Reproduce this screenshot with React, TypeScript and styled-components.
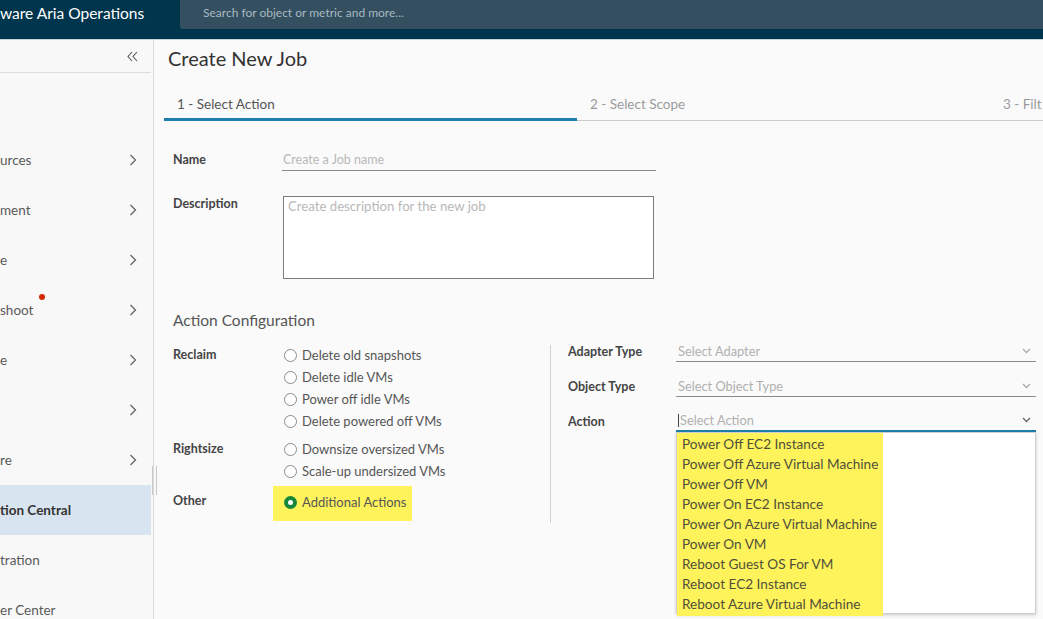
import React from "react";
import styled, { createGlobalStyle } from "styled-components";

const Global = createGlobalStyle`
  html, body { margin: 0; padding: 0; }
  body { font-family: Lato, "Open Sans", sans-serif; overflow: hidden; background: #fafafa; }
  * { box-sizing: border-box; }
`;

const Page = styled.div`
  width: 1043px;
  height: 619px;
  overflow: hidden;
  display: flex;
  flex-direction: column;
`;

const Header = styled.header`
  height: 40px;
  flex: none;
  display: flex;
  align-items: flex-start;
  background: #00364d;
  border-bottom: 1px solid #c5d3db;
`;

const Brand = styled.div`
  width: 180px;
  height: 29px;
  display: flex;
  align-items: center;
  color: #ffffff;
  font-size: 15.5px;
  white-space: nowrap;
  overflow: hidden;
  padding-bottom: 4px;
`;

const Search = styled.div`
  flex: 1;
  height: 29px;
  background: #344f5f;
  border-bottom-left-radius: 3px;
  display: flex;
  align-items: center;
  padding: 0 0 4px 23px;
  color: #a9b8c1;
  font-size: 12px;
`;

const Body = styled.div`
  flex: 1;
  display: flex;
  min-height: 0;
`;

const Sidebar = styled.nav`
  width: 154px;
  flex: none;
  background: #f8f8f8;
  border-right: 1px solid #dcdcdc;
  position: relative;
  display: flex;
  flex-direction: column;
`;

const CollapseRow = styled.div`
  height: 33px;
  flex: none;
  border-bottom: 1px solid #dcdcdc;
  margin-right: 2px;
  display: flex;
  align-items: center;
  justify-content: flex-end;
  padding-right: 13px;
  color: #555;
`;

const NavList = styled.div`
  padding-top: 12px;
  flex: none;
  display: flex;
  flex-direction: column;
`;

const NavItem = styled.div<{ $active?: boolean }>`
  height: 50px;
  flex: none;
  display: flex;
  align-items: center;
  justify-content: space-between;
  padding-right: 14px;
  margin-right: 2px;
  background: ${(p) => (p.$active ? "#d8e4ef" : "transparent")};
  color: ${(p) => (p.$active ? "#333" : "#5a5a5a")};
  font-weight: ${(p) => (p.$active ? 700 : 400)};
  font-size: 13.5px;
  white-space: nowrap;
`;

const NavLabel = styled.span`
  position: relative;
`;

const Dot = styled.span`
  position: absolute;
  top: -8px;
  right: -12px;
  width: 6px;
  height: 6px;
  border-radius: 50%;
  background: #d42a00;
`;

const ScrollHandle = styled.div`
  position: absolute;
  right: -4px;
  top: 426px;
  width: 5px;
  height: 29px;
  border-left: 1px solid #c8c8c8;
  border-right: 1px solid #c8c8c8;
`;

const Main = styled.main`
  flex: 1;
  padding-left: 10px;
  display: flex;
  flex-direction: column;
  position: relative;
`;

const Title = styled.h1`
  margin: 6px 0 0 4px;
  font-size: 20px;
  line-height: 24px;
  font-weight: 400;
  color: #333;
`;

const Tabs = styled.div`
  margin-top: 16px;
  display: flex;
  border-bottom: 1px solid #cccccc;
`;

const Tab = styled.div<{ $active?: boolean }>`
  width: 413px;
  flex: none;
  height: 35px;
  padding: 4px 0 0 13px;
  line-height: 28px;
  font-size: 13.5px;
  color: ${(p) => (p.$active ? "#555" : "#9a9a9a")};
  white-space: nowrap;
  box-shadow: ${(p) => (p.$active ? "inset 0 -3px 0 #1f7fae" : "none")};
  margin-bottom: -1px;
`;

const Form = styled.div`
  padding-left: 9px;
  display: flex;
  flex-direction: column;
`;

const FieldRow = styled.div<{ $top: number; $align?: string }>`
  display: flex;
  align-items: ${(p) => p.$align || "center"};
  margin-top: ${(p) => p.$top}px;
`;

const Label = styled.div<{ $w: number }>`
  width: ${(p) => p.$w}px;
  flex: none;
  font-size: 12.5px;
  font-weight: 700;
  color: #444;
  line-height: 16px;
`;

const TextInput = styled.div`
  width: 374px;
  height: 22px;
  border-bottom: 1px solid #8a8a8a;
  font-size: 12.5px;
  color: #b8b8b8;
  line-height: 22px;
  padding-left: 1px;
`;

const TextArea = styled.div`
  width: 371px;
  height: 83px;
  margin-left: 1px;
  border: 1px solid #7d7d7d;
  background: #fff;
  font-size: 13.2px;
  color: #b8b8b8;
  padding: 0 4px;
  line-height: 18px;
`;

const SectionTitle = styled.h2`
  margin: 31px 0 0 0;
  font-size: 15.5px;
  line-height: 20px;
  font-weight: 400;
  color: #555;
`;

const Config = styled.div`
  margin-top: 14px;
  display: flex;
`;

const LeftCol = styled.div`
  width: 377px;
  flex: none;
  display: flex;
  flex-direction: column;
`;

const Divider = styled.div`
  width: 1px;
  height: 178px;
  background: #d0d0d0;
  flex: none;
  margin-top: 1px;
`;

const Group = styled.div<{ $top?: number }>`
  display: flex;
  align-items: flex-start;
  margin-top: ${(p) => p.$top ?? 0}px;
`;

const GroupLabel = styled(Label)<{ $pad?: number }>`
  padding-top: ${(p) => p.$pad ?? 3}px;
`;

const Options = styled.div`
  display: flex;
  flex-direction: column;
`;

const Option = styled.div<{ $hl?: boolean }>`
  display: flex;
  align-items: center;
  gap: 5px;
  height: ${(p) => (p.$hl ? 35 : 22)}px;
  font-size: 13px;
  color: #565656;
  white-space: nowrap;
  background: ${(p) => (p.$hl ? "#fff35c" : "transparent")};
  margin-left: ${(p) => (p.$hl ? -11 : 0)}px;
  padding: ${(p) => (p.$hl ? "0 5px 3px 11px" : "0")};
  align-self: flex-start;
`;

const Radio = styled.span<{ $on?: boolean }>`
  width: 13px;
  height: 13px;
  border-radius: 50%;
  flex: none;
  border: ${(p) => (p.$on ? "4px solid #17873a" : "1px solid #8a8a8a")};
  background: #fff;
`;

const RightCol = styled.div`
  flex: 1;
  padding-left: 17px;
  display: flex;
  flex-direction: column;
  gap: 13px;
  margin-top: -4px;
`;

const SelectRow = styled.div`
  display: flex;
  align-items: flex-end;
  position: relative;
`;

const SelectLabel = styled(Label)`
  width: 108px;
  padding-bottom: 2px;
`;

const Select = styled.div<{ $active?: boolean }>`
  width: 360px;
  height: 22px;
  display: flex;
  align-items: center;
  justify-content: space-between;
  padding: 0 5px 0 2px;
  font-size: 12.8px;
  color: #b0b0b0;
  border-bottom: ${(p) => (p.$active ? "2px solid #1f7fae" : "1px solid #8a8a8a")};
`;

const Caret = styled.span`
  width: 1px;
  height: 13px;
  background: #444;
  margin-right: 1px;
`;

const Placeholder = styled.span`
  flex: 1;
`;

const Menu = styled.div`
  position: absolute;
  top: 100%;
  left: 108px;
  width: 360px;
  height: 182px;
  background: #fff;
  border: 1px solid #cfcfcf;
  box-shadow: 0 1px 3px rgba(0, 0, 0, 0.2);
  z-index: 2;
`;

const MenuList = styled.div`
  display: inline-flex;
  flex-direction: column;
  background: #fff35c;
  padding: 1px 5px 2px 5px;
`;

const MenuItem = styled.div`
  height: 20px;
  line-height: 20px;
  font-size: 13.6px;
  color: #4f4f3a;
  white-space: nowrap;
`;

const Chevron = ({ dir = "right", color = "#666" }: { dir?: "right" | "down" | "left2"; color?: string }) => {
  if (dir === "down")
    return (
      <svg width={9} height={6} viewBox="0 0 9 6">
        <polyline points="1,1 4.5,4.5 8,1" fill="none" stroke={color} strokeWidth={1.3} />
      </svg>
    );
  if (dir === "left2")
    return (
      <svg width={11} height={11} viewBox="0 0 11 11">
        <polyline points="5,1 1,5.5 5,10" fill="none" stroke={color} strokeWidth={1.1} />
        <polyline points="10,1 6,5.5 10,10" fill="none" stroke={color} strokeWidth={1.1} />
      </svg>
    );
  return (
    <svg width={8} height={12} viewBox="0 0 8 12">
      <polyline points="1.5,1 6.5,6 1.5,11" fill="none" stroke={color} strokeWidth={1.3} />
    </svg>
  );
};

const navItems: { label: string; chevron?: boolean; dot?: boolean; active?: boolean }[] = [
  { label: "" },
  { label: "urces", chevron: true },
  { label: "ment", chevron: true },
  { label: "e", chevron: true },
  { label: "shoot", chevron: true, dot: true },
  { label: "e", chevron: true },
  { label: "", chevron: true },
  { label: "re", chevron: true },
  { label: "tion Central", active: true },
  { label: "tration" },
  { label: "er Center" },
];

const menuItems = [
  "Power Off EC2 Instance",
  "Power Off Azure Virtual Machine",
  "Power Off VM",
  "Power On EC2 Instance",
  "Power On Azure Virtual Machine",
  "Power On VM",
  "Reboot Guest OS For VM",
  "Reboot EC2 Instance",
  "Reboot Azure Virtual Machine",
];

export default function App() {
  return (
    <Page>
      <Global />
      <Header>
        <Brand>ware Aria Operations</Brand>
        <Search>Search for object or metric and more...</Search>
      </Header>
      <Body>
        <Sidebar>
          <CollapseRow>
            <Chevron dir="left2" color="#555" />
          </CollapseRow>
          <NavList>
            {navItems.map((n, i) => (
              <NavItem key={i} $active={n.active}>
                <NavLabel>
                  {n.label}
                  {n.dot && <Dot />}
                </NavLabel>
                {n.chevron && <Chevron />}
              </NavItem>
            ))}
          </NavList>
          <ScrollHandle />
        </Sidebar>
        <Main>
          <Title>Create New Job</Title>
          <Tabs>
            <Tab $active>1 - Select Action</Tab>
            <Tab>2 - Select Scope</Tab>
            <Tab>3 - Filt</Tab>
          </Tabs>
          <Form>
            <FieldRow $top={28}>
              <Label $w={109}>Name</Label>
              <TextInput>Create a Job name</TextInput>
            </FieldRow>
            <FieldRow $top={25} $align="flex-start">
              <Label $w={109}>Description</Label>
              <TextArea>Create description for the new job</TextArea>
            </FieldRow>
            <SectionTitle>Action Configuration</SectionTitle>
            <Config>
              <LeftCol>
                <Group>
                  <GroupLabel $w={111}>Reclaim</GroupLabel>
                  <Options>
                    <Option><Radio />Delete old snapshots</Option>
                    <Option><Radio />Delete idle VMs</Option>
                    <Option><Radio />Power off idle VMs</Option>
                    <Option><Radio />Delete powered off VMs</Option>
                  </Options>
                </Group>
                <Group $top={6}>
                  <GroupLabel $w={111}>Rightsize</GroupLabel>
                  <Options>
                    <Option><Radio />Downsize oversized VMs</Option>
                    <Option><Radio />Scale-up undersized VMs</Option>
                  </Options>
                </Group>
                <Group $top={4}>
                  <GroupLabel $w={111} $pad={7}>Other</GroupLabel>
                  <Options>
                    <Option $hl><Radio $on />Additional Actions</Option>
                  </Options>
                </Group>
              </LeftCol>
              <Divider />
              <RightCol>
                <SelectRow>
                  <SelectLabel $w={108}>Adapter Type</SelectLabel>
                  <Select>
                    <Placeholder>Select Adapter</Placeholder>
                    <Chevron dir="down" color="#aaa" />
                  </Select>
                </SelectRow>
                <SelectRow>
                  <SelectLabel $w={108}>Object Type</SelectLabel>
                  <Select>
                    <Placeholder>Select Object Type</Placeholder>
                    <Chevron dir="down" color="#aaa" />
                  </Select>
                </SelectRow>
                <SelectRow>
                  <SelectLabel $w={108}>Action</SelectLabel>
                  <Select $active>
                    <Caret />
                    <Placeholder>Select Action</Placeholder>
                    <Chevron dir="down" color="#666" />
                  </Select>
                  <Menu>
                    <MenuList>
                      {menuItems.map((m) => (
                        <MenuItem key={m}>{m}</MenuItem>
                      ))}
                    </MenuList>
                  </Menu>
                </SelectRow>
              </RightCol>
            </Config>
          </Form>
        </Main>
      </Body>
    </Page>
  );
}
